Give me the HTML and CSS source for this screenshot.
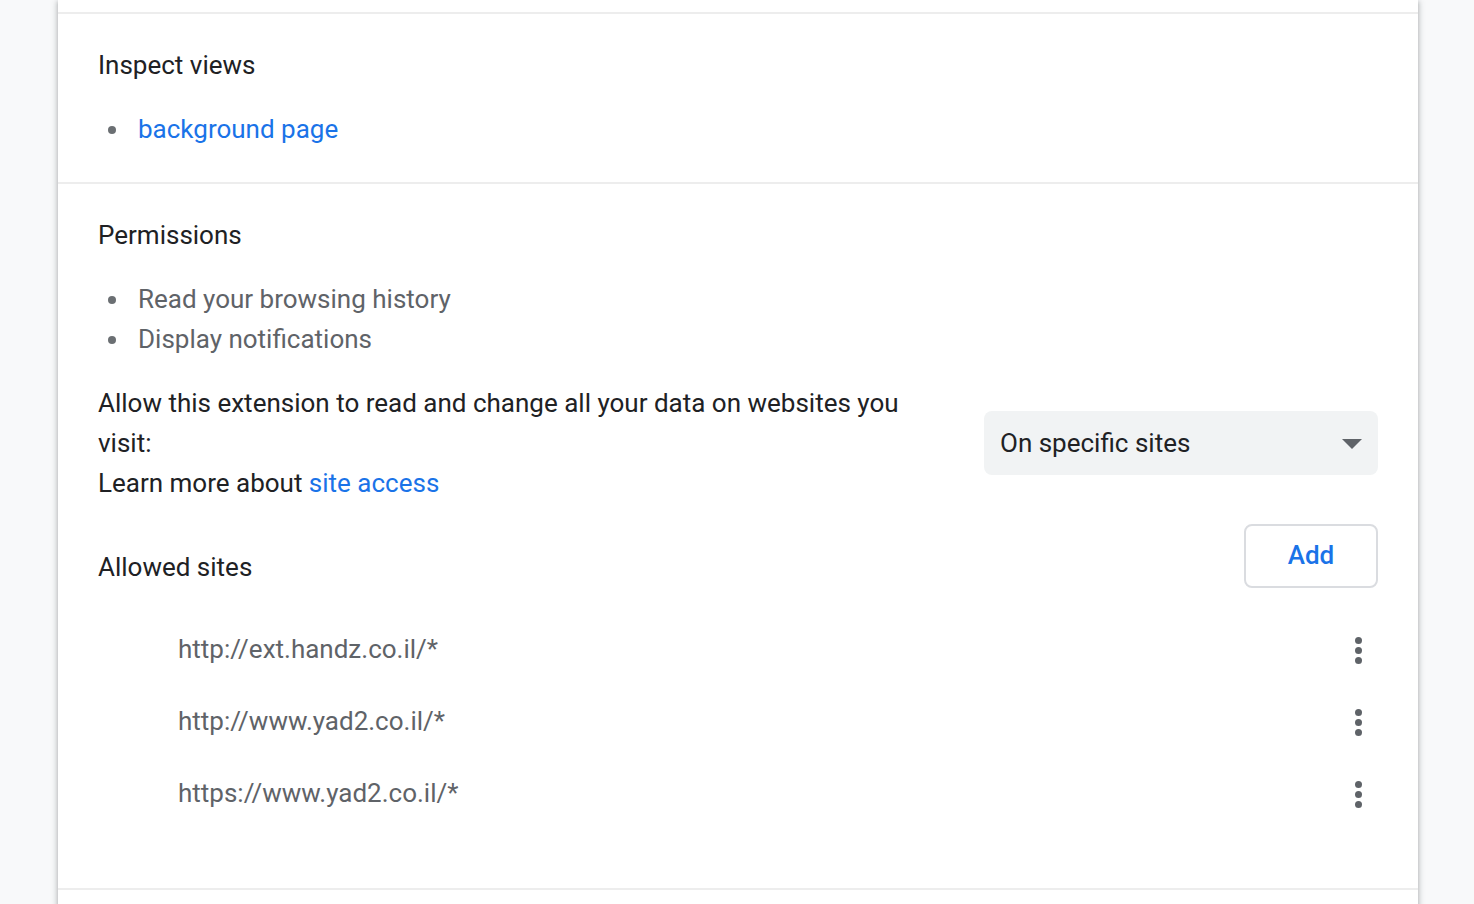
FILE: index.html
```html
<!DOCTYPE html>
<html lang="en">
<head>
<meta charset="utf-8">
<title>Extension details</title>
<link rel="stylesheet" href="styles.css">
</head>
<body>
<div class="card">
  <div class="spill"></div>

  <section class="section">
    <h2 class="section-title">Inspect views</h2>
    <ul class="bullets">
      <li><a class="link" href="#">background page</a></li>
    </ul>
  </section>

  <section class="section">
    <h2 class="section-title">Permissions</h2>
    <ul class="bullets">
      <li>Read your browsing history</li>
      <li>Display notifications</li>
    </ul>

    <div class="access-row">
      <div class="access-text">
        Allow this extension to read and change all your data on websites you visit:<br>
        Learn more about <a class="link" href="#">site access</a>
      </div>
      <div class="select">
        <span>On specific sites</span>
        <svg class="caret" width="20" height="10" viewBox="0 0 20 10"><path d="M0 0 L20 0 L10 10 Z" fill="#5f6368"/></svg>
      </div>
    </div>

    <div class="allowed-header">
      <span class="allowed-title">Allowed sites</span>
      <button class="add-btn">Add</button>
    </div>

    <ul class="sites">
      <li class="site-row"><span>http://ext.handz.co.il/*</span><span class="kebab"><i></i><i></i><i></i></span></li>
      <li class="site-row"><span>http://www.yad2.co.il/*</span><span class="kebab"><i></i><i></i><i></i></span></li>
      <li class="site-row"><span>https://www.yad2.co.il/*</span><span class="kebab"><i></i><i></i><i></i></span></li>
    </ul>
  </section>

  <section class="section last"></section>
</div>
</body>
</html>
```

FILE: styles.css
```css
html, body {
  margin: 0;
  padding: 0;
  background: #f8f9fa;
  height: 100%;
  overflow: hidden;
}

body {
  font-family: Roboto, "Liberation Sans", sans-serif;
  font-size: 26px;
  line-height: 40px;
  color: #202124;
  padding-left: 2px;
  box-sizing: border-box;
}

.card {
  width: 1360px;
  margin: 0 auto;
  background: #fff;
  min-height: 904px;
  box-shadow: 0 2px 4px rgba(60, 64, 67, 0.3), 0 2px 6px 2px rgba(60, 64, 67, 0.15);
}

.spill {
  height: 12px;
}

.section {
  border-top: 2px solid rgba(0, 0, 0, 0.07);
  padding: 31px 40px 33px;
}

.section.last {
  padding: 0;
  height: 40px;
}

.section-title {
  margin: 0;
  font-size: 26px;
  font-weight: 400;
  line-height: 40px;
  color: #202124;
}

.bullets {
  list-style: none;
  margin: 24px 0 0;
  padding-left: 40px;
  color: #5f6368;
}

.bullets li::before {
  content: "";
  display: inline-block;
  width: 8px;
  height: 8px;
  border-radius: 50%;
  background: #6b6f73;
  margin-left: -30px;
  margin-right: 22px;
  vertical-align: middle;
  position: relative;
  top: -1px;
}

.link {
  color: #1a73e8;
  text-decoration: none;
}

.access-row {
  margin-top: 24px;
  display: flex;
  align-items: center;
  gap: 40px;
}

.access-text {
  flex: 1;
  color: #202124;
}

.select {
  width: 394px;
  height: 64px;
  box-sizing: border-box;
  flex: none;
  background: #f1f3f4;
  border-radius: 8px;
  display: flex;
  align-items: center;
  justify-content: space-between;
  padding: 0 16px;
  color: #202124;
}

.caret {
  display: block;
  margin-top: 2px;
}

.allowed-header {
  margin-top: 21px;
  display: flex;
  justify-content: space-between;
  align-items: flex-end;
}

.allowed-title {
  line-height: 40px;
  margin-bottom: 1px;
}

.add-btn {
  width: 134px;
  height: 64px;
  box-sizing: border-box;
  border: 2px solid #dadce0;
  border-radius: 8px;
  background: #fff;
  color: #1a73e8;
  font-family: Roboto, "Liberation Sans", sans-serif;
  font-size: 26px;
  font-weight: 500;
  padding: 0 0 2px;
}

.sites {
  list-style: none;
  margin: 25px 0 26px;
  padding: 0 0 0 80px;
  color: #5f6368;
}

.site-row {
  height: 72px;
  display: flex;
  align-items: center;
  justify-content: space-between;
}

.kebab {
  width: 40px;
  display: flex;
  flex-direction: column;
  align-items: center;
  gap: 3px;
  margin-top: 2px;
}

.kebab i {
  display: block;
  width: 7px;
  height: 7px;
  border-radius: 50%;
  background: #5f6368;
}
```
